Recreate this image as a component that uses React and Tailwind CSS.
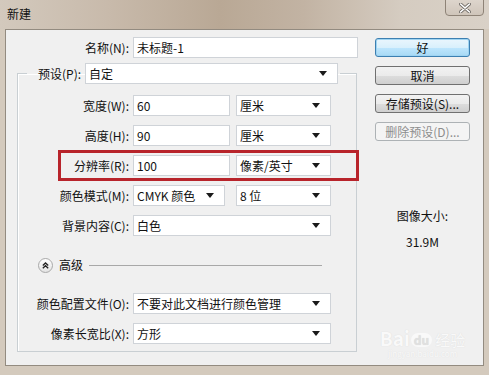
import React from 'react';

const Arrow = () => (
  <svg width="8" height="5" viewBox="0 0 8 5" className="shrink-0">
    <polygon points="0,0 8,0 4,5" fill="#1a1a1a" />
  </svg>
);

const Input = ({ value, className = '' }) => (
  <div className={`h-[21px] shrink-0 bg-white border border-[#cfd3d8] flex items-center pl-[3px] ${className}`}>
    {value}
  </div>
);

const Select = ({ value, className = '' }) => (
  <div className={`h-[21px] shrink-0 bg-white border border-[#cfd3d8] flex items-center justify-between pl-[3px] pr-[10px] ${className}`}>
    <span>{value}</span>
    <Arrow />
  </div>
);

const Row = ({ label, children, labelW = 'w-[115px]' }) => (
  <div className="flex items-center h-[21px]">
    <div className={`${labelW} shrink-0 text-right pr-[4px]`}>{label}</div>
    {children}
  </div>
);

const Button = ({ children, primary, disabled }) => (
  <div
    className={`h-[19px] w-[95px] rounded-[3px] border flex items-center justify-center leading-none ${
      primary
        ? 'border-[#3c7fb1] bg-[linear-gradient(#eaf6fd_0%,#d9f0fc_50%,#bee6fd_51%,#a7d9f5_100%)] shadow-[0_0_0_1px_#9fd4f2_inset]'
        : disabled
        ? 'border-[#adb2b5] bg-[#f4f4f4] text-[#8d8d8d]'
        : 'border-[#707070] bg-[linear-gradient(#f2f2f2_0%,#ebebeb_50%,#dddddd_51%,#cfcfcf_100%)]'
    }`}
  >
    {children}
  </div>
);

export default function App() {
  return (
    <div
      className="w-[489px] h-[375px] bg-[#d4cabd] text-[12px] text-[#111] overflow-hidden flex flex-col"
      style={{ fontFamily: '"Noto Sans CJK SC", "Liberation Sans", sans-serif' }}
    >
      {/* title bar */}
      <div className="h-[29px] shrink-0 flex items-start justify-between bg-[linear-gradient(90deg,#d3c9bd_0%,#c8baab_22%,#b9a895_45%,#c2b3a3_62%,#d5ccc1_82%,#d9d1c7_100%)]">
        <div className="pl-[7px] pt-[5px] text-[12px]">新建</div>
        <div className="mr-[5px] w-[39px] h-[17px] -mt-px rounded-b-[4px] border border-[#8e8377] bg-[linear-gradient(#ddd5cc,#cfc5ba)] flex items-center justify-center">
          <svg width="12" height="10" viewBox="0 0 12 10">
            <path d="M1.5 1 L10.5 9 M10.5 1 L1.5 9" stroke="#6f6a64" strokeWidth="3.2" strokeLinecap="round" />
            <path d="M1.5 1 L10.5 9 M10.5 1 L1.5 9" stroke="#ffffff" strokeWidth="1.6" strokeLinecap="round" />
          </svg>
        </div>
      </div>

      {/* panel */}
      <div className="mx-[5px] h-[337px] shrink-0 bg-[#f0f0f0] border border-[#938b80] flex">
        {/* left column */}
        <div className="pl-[11px] w-[352px] shrink-0 flex flex-col">
          <div className="mt-[7px]">
            <Row label="名称(N):" labelW="w-[116px]">
              <Input value="未标题-1" className="w-[225px]" />
            </Row>
          </div>

          <fieldset className="mt-[5px] w-[340px] border border-[#c9cfd3] shadow-[inset_1px_1px_0_#ffffff] pb-[7px]">
            <legend className="ml-[9px] px-[2px] flex items-center h-[21px]">
              <span className="pl-[9px] pr-[4px] shrink-0">预设(P):</span>
              <Select value="自定" className="w-[253px]" />
            </legend>

            <div className="pt-[11px] flex flex-col gap-[9px]">
              <Row label="宽度(W):">
                <Input value="60" className="w-[97px]" />
                <Select value="厘米" className="w-[95px] ml-[6px]" />
              </Row>
              <Row label="高度(H):">
                <Input value="90" className="w-[97px]" />
                <Select value="厘米" className="w-[95px] ml-[6px]" />
              </Row>
              <div className="relative">
                <Row label="分辨率(R):">
                  <Input value="100" className="w-[97px]" />
                  <Select value="像素/英寸" className="w-[95px] ml-[6px]" />
                </Row>
                <div className="absolute left-[40px] top-[-5px] w-[301px] h-[31px] border-[3px] border-[#b8242b] pointer-events-none" />
              </div>
              <Row label="颜色模式(M):">
                <Select value="CMYK 颜色" className="w-[92px]" />
                <Select value="8 位" className="w-[95px] ml-[11px]" />
              </Row>
              <Row label="背景内容(C):">
                <Select value="白色" className="w-[198px]" />
              </Row>
            </div>

            <div className="mt-[21px] h-[16px] flex items-center pl-[20px]">
              <div className="w-[15px] h-[15px] rounded-full border border-[#a9a9a9] bg-[linear-gradient(#ffffff,#e3e3e3)] flex items-center justify-center">
                <svg width="7" height="7" viewBox="0 0 7 7">
                  <path d="M0.8 3.5 L3.5 1 L6.2 3.5 M0.8 6.2 L3.5 3.7 L6.2 6.2" stroke="#222" strokeWidth="1.3" fill="none" />
                </svg>
              </div>
              <span className="ml-[6px]">高级</span>
              <div className="ml-[6px] w-[233px] h-px bg-[#a8a8a8]" />
            </div>

            <div className="mt-[20px] flex flex-col gap-[9px]">
              <Row label="颜色配置文件(O):">
                <Select value="不要对此文档进行颜色管理" className="w-[198px]" />
              </Row>
              <Row label="像素长宽比(X):">
                <Select value="方形" className="w-[198px]" />
              </Row>
            </div>
          </fieldset>
        </div>

        {/* right column */}
        <div className="ml-[17px] w-[95px] flex flex-col items-center">
          <div className="mt-[8px] flex flex-col gap-[9px]">
            <Button primary>好</Button>
            <Button>取消</Button>
            <Button>存储预设(S)...</Button>
            <Button disabled>删除预设(D)...</Button>
          </div>
          <div className="mt-[66px]">图像大小:</div>
          <div className="mt-[8px]">31.9M</div>
          <div className="mt-auto mb-[7px] flex flex-col items-center opacity-60">
            <div className="flex items-end gap-[1px] text-white [text-shadow:0_0_1px_#c8c8c8]">
              <span className="text-[19px] font-bold leading-none">Bai</span>
              <span className="text-[12px] font-bold leading-none rounded-full bg-white text-[#d6d6d6] px-[3px] py-[1px]">du</span>
              <span className="text-[15px] leading-none ml-[2px]">经验</span>
            </div>
            <span className="text-[8px] text-white [text-shadow:0_0_1px_#d0d0d0] leading-none mt-[3px]">jingyan.baidu.com</span>
          </div>
        </div>
      </div>
    </div>
  );
}
